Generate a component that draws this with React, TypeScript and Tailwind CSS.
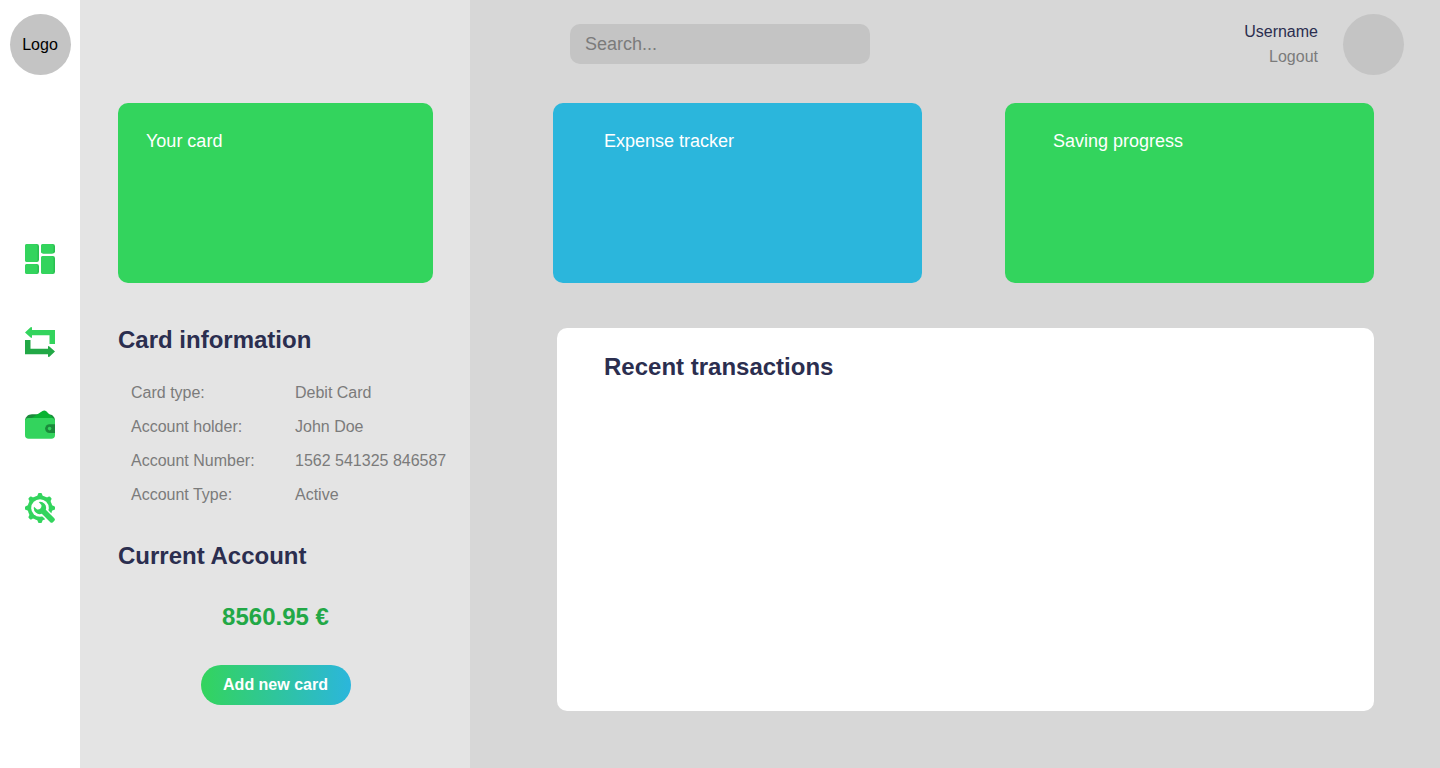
import React from "react";

function DashboardIcon() {
  const tiles = [
    { x: 0, y: 0, h: 18 },
    { x: 16, y: 0, h: 9.5 },
    { x: 0, y: 20, h: 10 },
    { x: 16, y: 12, h: 18 },
  ];
  return (
    <svg viewBox="0 0 30 30" className="size-[30px]" aria-hidden="true">
      {tiles.map((t) => (
        <g key={`${t.x}-${t.y}`}>
          <rect x={t.x} y={t.y} width="14" height={t.h} rx="2.3" fill="#2abf50" />
          <path
            d={`M${t.x + 2.3} ${t.y}h8.200a2 2 0 0 1 2 2v${t.h - 4}a2 2 0 0 1-2 2h-8.200a2.300 2.300 0 0 1-2.300-2.300v-${t.h - 4.6}a2.300 2.300 0 0 1 2.300-2.300z`}
            fill="#33d45d"
          />
        </g>
      ))}
    </svg>
  );
}

function TransferIcon() {
  return (
    <svg viewBox="0 0 30 30" className="size-[30px]" aria-hidden="true">
      <path d="M0 5.500 5.600.3Q7 -.5 7 1V3H30V17H24.500V8.300H7V10Q7 11.500 5.600 10.600Z" fill="#33d45d" />
      <path d="M30 24.500 24.400 29.700Q23 30.500 23 29V27.200H0V13H5.500V21.800H23V20Q23 18.500 24.400 19.400Z" fill="#22a846" />
    </svg>
  );
}

function WalletIcon() {
  return (
    <svg viewBox="0 0 30 30" className="size-[30px]" aria-hidden="true">
      <path d="M0 11C0 7 3 4.200 7 4.200H23.500C27.500 4.200 30 7 30 11V14H0Z" fill="#1b8a3b" />
      <path d="M6 8.500 17.500 1Q19.500-.3 21.500 1.500L28 8V11H6Z" fill="#08b332" />
      <path d="M0 10Q1 8 3 8H27Q29 8 30 10V25Q30 28.800 26.300 28.800H3.700Q0 28.800 0 25Z" fill="#33d45d" />
      <path d="M30 14.200H24.500A4.400 4.400 0 0 0 24.500 23H30Z" fill="#1b8a3b" />
      <circle cx="24.600" cy="18.600" r="1.800" fill="#33d45d" />
    </svg>
  );
}

function SettingsIcon() {
  const teeth = [0, 45, 90, 135, 180, 225, 270, 315];
  return (
    <svg viewBox="0 0 30 30" className="size-[30px]" aria-hidden="true">
      <mask id="gear-cut">
        <rect width="30" height="30" fill="#fff" />
        <circle cx="15" cy="15" r="8.800" fill="#000" />
        <path d="M17 17 30 30" stroke="#000" strokeWidth="8.500" />
      </mask>
      <g mask="url(#gear-cut)" fill="#33d45d">
        <circle cx="15" cy="15" r="12.400" />
        {teeth.map((a) => (
          <path key={a} d="M11.500 4Q12.800 2.500 12.900 1.200 13 0 14.200 0H15.800Q17 0 17.100 1.200 17.200 2.500 18.500 4Z" transform={`rotate(${a} 15 15)`} />
        ))}
      </g>
      <path
        d="M13.700 9A6 6 0 0 1 20.800 16.700L29.300 25.200Q30.500 26.500 29.400 27.800L27.900 29.300Q26.600 30.400 25.300 29.300L16.800 20.800A6 6 0 0 1 9 13.700L12.100 16.400Q14 16.800 15.400 15.500 16.800 14 16.400 12.100Z"
        fill="#33d45d"
      />
    </svg>
  );
}

const navItems = [
  { label: "Dashboard", Icon: DashboardIcon },
  { label: "Transfers", Icon: TransferIcon },
  { label: "Wallet", Icon: WalletIcon },
  { label: "Settings", Icon: SettingsIcon },
];

const cardDetails = [
  ["Card type:", "Debit Card"],
  ["Account holder:", "John Doe"],
  ["Account Number:", "1562 541325 846587"],
  ["Account Type:", "Active"],
];

function Sidebar() {
  return (
    <aside className="flex w-20 shrink-0 flex-col items-center bg-white pt-3.5">
      <div className="flex size-[61px] items-center justify-center rounded-full bg-[#c4c4c4] text-black">Logo</div>
      <nav className="mt-[169px] flex flex-col gap-[53px]">
        {navItems.map(({ label, Icon }) => (
          <a key={label} href="#" aria-label={label} className="block">
            <Icon />
          </a>
        ))}
      </nav>
    </aside>
  );
}

function AccountPanel() {
  return (
    <section className="w-[390px] shrink-0 bg-[#e4e4e4] pt-[103px] pr-[37px] pb-[63px] pl-[38px]">
      <div className="h-[180px] rounded-[10px] bg-[#33d45d] px-7 pt-6 text-lg text-white">
        <h2>Your card</h2>
      </div>
      <h2 className="mt-[41px] text-2xl font-bold text-[#2b2e4f]">Card information</h2>
      <dl className="mt-5 grid grid-cols-[164px_auto] pl-[13px] leading-[34px] whitespace-nowrap text-[#7b7b7b]">
        {cardDetails.map(([term, value]) => (
          <React.Fragment key={term}>
            <dt>{term}</dt>
            <dd>{value}</dd>
          </React.Fragment>
        ))}
      </dl>
      <h2 className="mt-7 text-2xl font-bold text-[#2b2e4f]">Current Account</h2>
      <div className="flex flex-col items-center">
        <p className="mt-[29px] text-2xl font-bold text-[#22a846]">8560.95 €</p>
        <button
          type="button"
          className="mt-8 h-10 w-[150px] rounded-full bg-linear-to-r/srgb from-[#33d45d] to-[#2bb6dc] font-bold text-white"
        >
          Add new card
        </button>
      </div>
    </section>
  );
}

function Header() {
  return (
    <header className="flex items-start justify-between pt-3.5 pr-9 pl-[100px]">
      <input
        type="search"
        aria-label="Search"
        placeholder="Search..."
        className="mt-2.5 h-10 w-[300px] rounded-[10px] bg-[#c4c4c4] px-[15px] text-lg text-[#2b2e4f] outline-none placeholder:text-[#7b7b7b]"
      />
      <div className="flex items-start gap-[25px]">
        <div className="mt-[5px] flex flex-col text-right leading-[25px]">
          <span className="text-[#2b2e4f]">Username</span>
          <a href="#" className="text-[#7b7b7b]">
            Logout
          </a>
        </div>
        <div className="size-[61px] rounded-full bg-[#c4c4c4]" />
      </div>
    </header>
  );
}

export default function App() {
  return (
    <div className="flex min-h-screen bg-[#d7d7d7] font-['Liberation_Sans',Arial,sans-serif] text-base">
      <Sidebar />
      <AccountPanel />
      <main className="flex min-w-0 flex-1 flex-col">
        <Header />
        <div className="mt-7 grid grid-cols-2 gap-[83px] pr-[66px] pl-[83px] text-lg text-white">
          <section className="h-[180px] rounded-[10px] bg-[#2bb6dc] px-[51px] pt-6">
            <h2>Expense tracker</h2>
          </section>
          <section className="h-[180px] rounded-[10px] bg-[#33d45d] px-12 pt-6">
            <h2>Saving progress</h2>
          </section>
        </div>
        <section className="mt-[45px] mr-[66px] mb-[57px] ml-[87px] flex-1 rounded-[10px] bg-white px-[47px] pt-[23px]">
          <h2 className="text-2xl font-bold text-[#2b2e4f]">Recent transactions</h2>
        </section>
      </main>
    </div>
  );
}
